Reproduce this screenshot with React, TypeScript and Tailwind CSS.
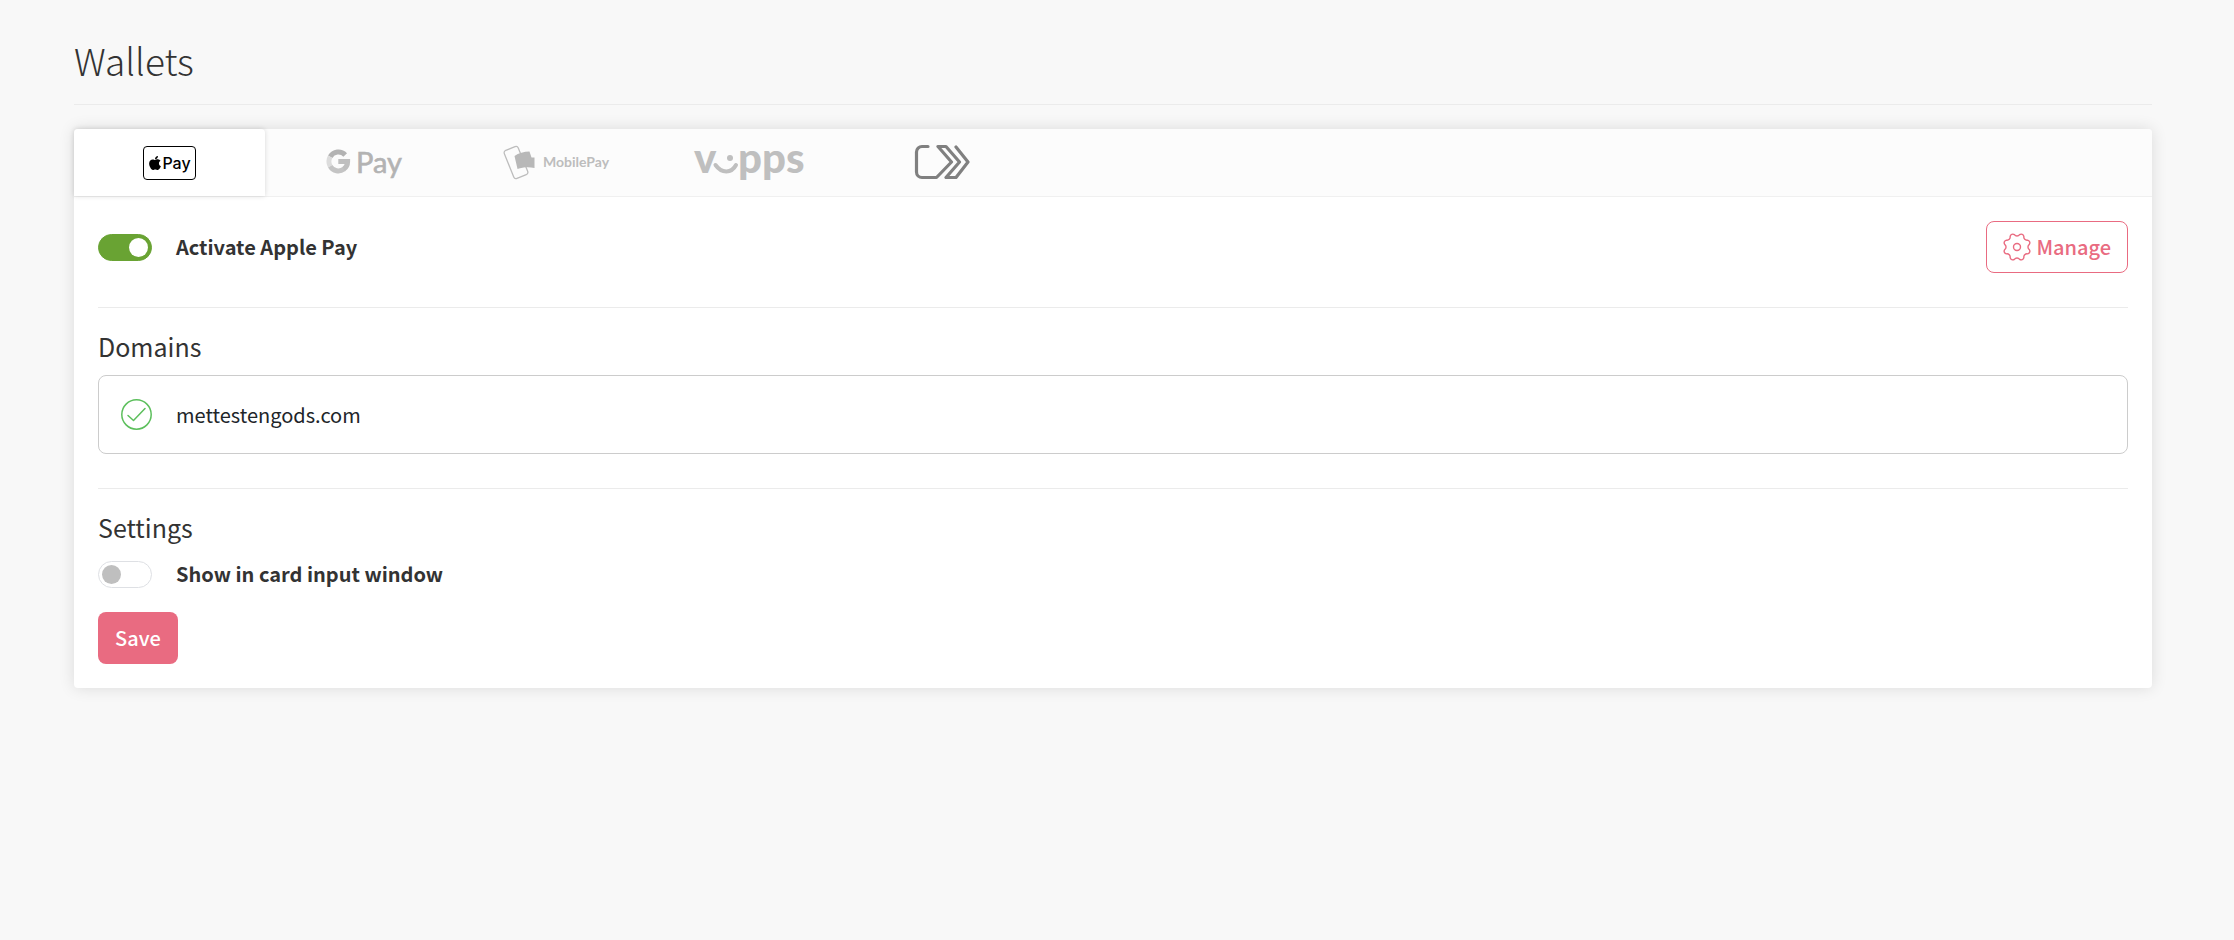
import { useState } from "react";
import type { ReactNode } from "react";
import { FaApple } from "react-icons/fa";

function ApplePayLogo() {
  return (
    <span className="flex h-[34px] w-[53px] items-center justify-center rounded-[4px] border border-black text-black">
      <FaApple size={16} className="-mx-px" />
      <span className="font-['Inter'] text-[16px] leading-5 font-medium">Pay</span>
    </span>
  );
}

function GooglePayLogo() {
  return (
    <svg width="76" height="60" viewBox="0 -12 76 60" className="overflow-visible" role="img" aria-label="Google Pay">
      <g fill="none" strokeWidth="5">
        <path d="M20.2 9.9A9.4 9.4 0 0 0 5.2 11.8" stroke="#b3b3b3" />
        <path d="M5.2 11.8A9.4 9.4 0 0 0 5.2 21.2" stroke="#dcdcdc" />
        <path d="M5.2 21.2A9.4 9.4 0 0 0 19 24" stroke="#c4c4c4" />
        <path d="M13.3 16.6H22.6A9.4 9.4 0 0 1 18.6 24.2" stroke="#bfbfbf" />
      </g>
      <text
        x="31"
        y="28"
        fontSize="29"
        fill="#b3b3b3"
        stroke="#b3b3b3"
        strokeWidth="0.6"
        className="font-['Lato']"
      >
        Pay
      </text>
    </svg>
  );
}

function MobilePayLogo() {
  return (
    <svg width="106" height="36" viewBox="0 0 106 36" className="overflow-visible" role="img" aria-label="MobilePay">
      <rect
        x="5.5"
        y="2.5"
        width="15"
        height="30"
        rx="2.5"
        transform="rotate(-22 13 17.5)"
        fill="none"
        stroke="#bdbdbd"
        strokeWidth="1.3"
      />
      <path
        d="M11.5 11C15.5 8 21 6.5 26.5 6.5L28.5 12.5H31.5V23C25.5 21.5 20 22 14.5 24Z"
        fill="#b8b8b8"
      />
      <text x="40" y="22" fontSize="14" fill="#bdbdbd" className="font-['Lato'] font-bold">
        MobilePay
      </text>
    </svg>
  );
}

function VippsLogo() {
  return (
    <svg width="112" height="60" viewBox="0 -10 112 60" className="overflow-visible" role="img" aria-label="Vipps">
      <g fill="#bfbfbf" fontSize="42" className="font-['Lato'] font-black">
        <text x="1" y="30">v</text>
        <text x="45" y="30">pps</text>
      </g>
      <circle cx="37" cy="15" r="3" fill="#bfbfbf" />
      <path
        d="M22.5 22C28.5 30.5 38.5 30.5 43 22"
        fill="none"
        stroke="#bfbfbf"
        strokeWidth="4"
        strokeLinecap="round"
      />
    </svg>
  );
}

function ClickToPayLogo() {
  return (
    <svg width="56" height="38" viewBox="0 0 56 38" role="img" aria-label="Click to Pay">
      <path
        d="M14 2.5H8A5.5 5.5 0 0 0 2.5 8V28A5.5 5.5 0 0 0 8 33.5H22.5L37.500 18L24 2.5H32L45.500 18L32 33.500H42L54 18L42 3"
        fill="none"
        stroke="#808080"
        strokeWidth="3.2"
        strokeLinecap="round"
        strokeLinejoin="round"
      />
    </svg>
  );
}

const gearPoint = (deg: number) => {
  const rad = (deg * Math.PI) / 180;
  return `${(14 + 12.6 * Math.cos(rad)).toFixed(2)} ${(14 + 12.6 * Math.sin(rad)).toFixed(2)}`;
};

// eight rounded teeth with a notch every 45 degrees
const gearPath =
  `M${gearPoint(-12)}` +
  Array.from({ length: 8 }, (_, i) => {
    const a = i * 45;
    return `A3.2 3.2 0 0 0 ${gearPoint(a + 12)}A2.7 2.7 0 0 1 ${gearPoint(a + 33)}`;
  }).join("") +
  "Z";

function GearIcon() {
  return (
    <svg width="28" height="28" viewBox="0 0 28 28" fill="none" stroke="currentColor" strokeWidth="1.4" aria-hidden="true">
      <path d={gearPath} strokeLinejoin="round" />
      <circle cx="14" cy="14" r="3.5" />
    </svg>
  );
}

function CheckIcon() {
  return (
    <svg width="31" height="31" viewBox="0 0 31 31" fill="none" stroke="#5cbf5c" strokeWidth="1.5" aria-hidden="true">
      <circle cx="15.5" cy="15.5" r="14.7" />
      <path d="M7 16.5L12.5 21.5L24 9.5" strokeLinecap="round" strokeLinejoin="round" />
    </svg>
  );
}

type ToggleProps = {
  id: string;
  label: string;
  checked: boolean;
  onChange: (value: boolean) => void;
};

function Toggle({ id, label, checked, onChange }: ToggleProps) {
  return (
    <div className="flex items-center gap-6">
      <input
        id={id}
        type="checkbox"
        role="switch"
        checked={checked}
        onChange={(e) => onChange(e.target.checked)}
        className="flex h-[27px] w-[54px] shrink-0 cursor-pointer appearance-none items-center rounded-full border border-[#dee0e4] bg-white px-[3px] before:size-[19px] before:rounded-full before:bg-[#bfbfbf] checked:justify-end checked:border-[#69a333] checked:bg-[#69a333] checked:before:bg-white"
      />
      <label htmlFor={id} className="cursor-pointer text-[20px] leading-7 font-bold">
        {label}
      </label>
    </div>
  );
}

const wallets: { id: string; name: string; logo: ReactNode }[] = [
  { id: "apple", name: "Apple Pay", logo: <ApplePayLogo /> },
  { id: "google", name: "Google Pay", logo: <GooglePayLogo /> },
  { id: "mobilepay", name: "MobilePay", logo: <MobilePayLogo /> },
  { id: "vipps", name: "Vipps", logo: <VippsLogo /> },
  { id: "click", name: "Click to Pay", logo: <ClickToPayLogo /> },
];

export default function App() {
  const [active, setActive] = useState("apple");
  const [enabled, setEnabled] = useState(true);
  const [showInWindow, setShowInWindow] = useState(false);

  return (
    <main className="min-h-screen bg-[#f8f8f8] pt-9 pr-[82px] pb-12 pl-[74px] font-['Noto_Sans_CJK_SC',sans-serif] text-[#333]">
      {/* Heading */}
      <h1 className="border-b border-[#ebebeb] pb-5 text-[37px] leading-[48px] font-light">
        Wallets
      </h1>

      <section className="mt-6 rounded-[4px] bg-white shadow-[0_0_16px_rgba(0,0,0,0.12)]">
        {/* Wallet tabs */}
        <div role="tablist" className="flex gap-0.5 rounded-t-[4px] border-b border-[#f0f0f0] bg-[#fcfcfc]">
          {wallets.map((wallet) => (
            <button
              key={wallet.id}
              type="button"
              role="tab"
              aria-label={wallet.name}
              aria-selected={active === wallet.id}
              onClick={() => setActive(wallet.id)}
              className="flex h-[67px] w-[191px] cursor-pointer items-center justify-center rounded-t-[4px] aria-selected:bg-white aria-selected:shadow-[0_0_5px_rgba(0,0,0,0.15)]"
            >
              {wallet.logo}
            </button>
          ))}
        </div>

        <div className="p-6">
          {/* Activation */}
          <div className="flex items-center justify-between">
            <Toggle id="activate" label="Activate Apple Pay" checked={enabled} onChange={setEnabled} />
            <button
              type="button"
              className="flex h-[52px] cursor-pointer items-center gap-[5px] rounded-lg border border-[#e96b81] px-4 text-[20px] font-medium text-[#e96b81]"
            >
              <GearIcon />
              Manage
            </button>
          </div>

          <hr className="mt-[34px] mb-5 border-[#ebebeb]" />

          {/* Domains */}
          <h2 className="text-[25px] leading-9">Domains</h2>
          <ul className="mt-[11px] rounded-lg border border-[#ccc]">
            <li className="flex h-[77px] items-center gap-6 px-[22px] text-[20px] text-[#212529]">
              <CheckIcon />
              mettestengods.com
            </li>
          </ul>

          <hr className="mt-[34px] mb-5 border-[#ebebeb]" />

          {/* Settings */}
          <h2 className="text-[25px] leading-9">Settings</h2>
          <div className="mt-[15px]">
            <Toggle
              id="card-window"
              label="Show in card input window"
              checked={showInWindow}
              onChange={setShowInWindow}
            />
          </div>

          <button
            type="button"
            className="mt-6 h-[52px] cursor-pointer rounded-lg bg-[#e96b81] px-[17px] text-[20px] font-medium text-white"
          >
            Save
          </button>
        </div>
      </section>
    </main>
  );
}
